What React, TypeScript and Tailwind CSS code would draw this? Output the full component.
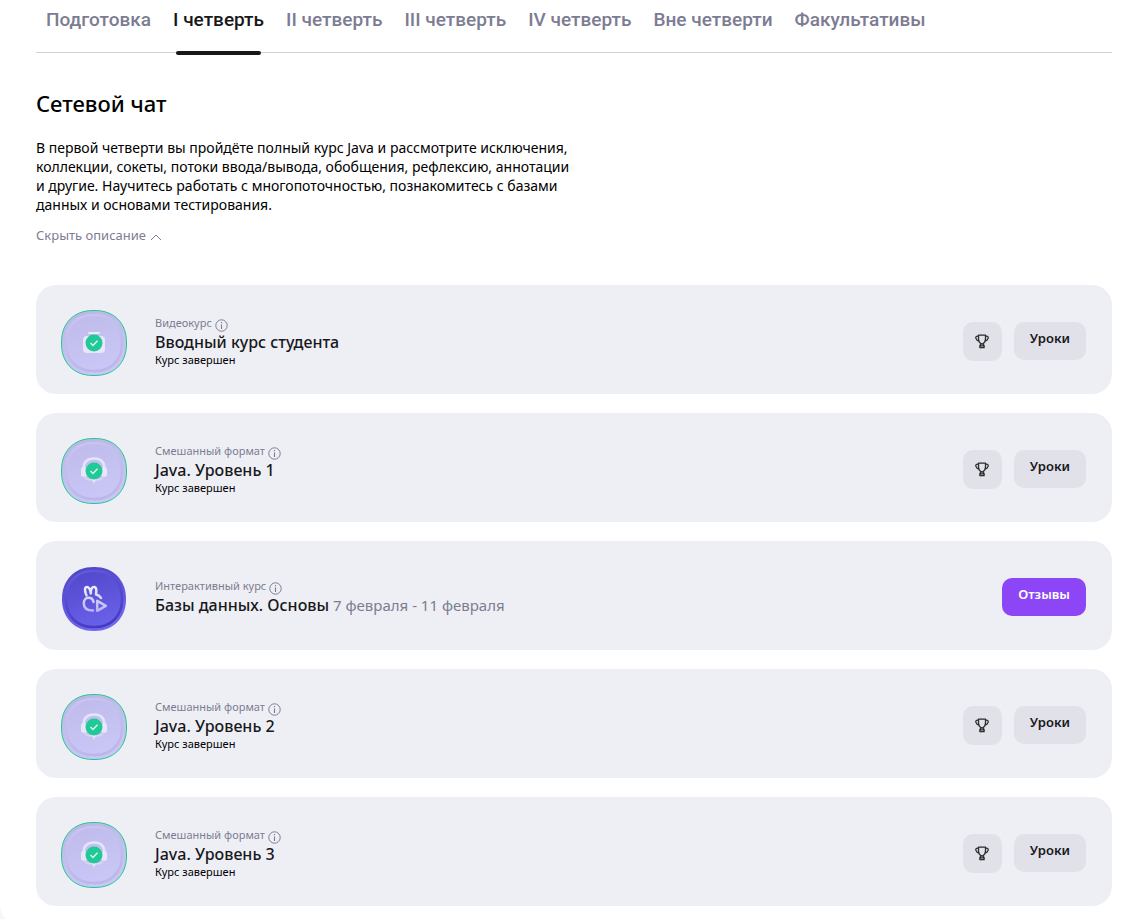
import React, { useState } from 'react';

type Course = {
    format: string;
    title: string;
    icon: 'camera' | 'headset' | 'rabbit';
    dates?: string;
    done: boolean;
};

const tabs = ['Подготовка', 'I четверть', 'II четверть', 'III четверть', 'IV четверть', 'Вне четверти', 'Факультативы'];

const courses: Course[] = [
    { format: 'Видеокурс', title: 'Вводный курс студента', icon: 'camera', done: true },
    { format: 'Смешанный формат', title: 'Java. Уровень 1', icon: 'headset', done: true },
    { format: 'Интерактивный курс', title: 'Базы данных. Основы', icon: 'rabbit', dates: '7 февраля - 11 февраля', done: false },
    { format: 'Смешанный формат', title: 'Java. Уровень 2', icon: 'headset', done: true },
    { format: 'Смешанный формат', title: 'Java. Уровень 3', icon: 'headset', done: true },
];

const SQUIRCLE = 'M33 .5H34C53 .5 65.5 13 65.5 32V34C65.5 53 53 65.5 34 65.5H32C13 65.5 .5 53 .5 34V32C.5 13 13 .5 32 .5Z';
const SQUIRCLE_INNER = 'M33 5H34C50 5 61 16 61 32V34C61 50 50 61 34 61H32C16 61 5 50 5 34V32C5 16 16 5 32 5Z';

const DoneIcon = ({ icon }: { icon: Course['icon'] }) => (
    <svg className="size-[66px] shrink-0" viewBox="0 0 66 66" fill="none" aria-hidden="true">
        <defs>
            <linearGradient id="doneFace" x1="24" y1="4" x2="44" y2="64" gradientUnits="userSpaceOnUse">
                <stop stopColor="#bfbbea" />
                <stop offset="1" stopColor="#cbc8f8" />
            </linearGradient>
            <linearGradient id="doneRim" x1="24" y1="1" x2="40" y2="65" gradientUnits="userSpaceOnUse">
                <stop stopColor="#bcb8e6" />
                <stop offset="1" stopColor="#cac6f6" />
            </linearGradient>
            <linearGradient id="doneEdge" x1="22" y1="4" x2="42" y2="62" gradientUnits="userSpaceOnUse">
                <stop stopColor="#c9c5f1" />
                <stop offset=".5" stopColor="#c0bcec" />
                <stop offset="1" stopColor="#bbb6e8" />
            </linearGradient>
        </defs>
        <path d={SQUIRCLE} fill="url(#doneRim)" stroke="#1fcb94" />
        <path d={SQUIRCLE_INNER} fill="url(#doneFace)" stroke="url(#doneEdge)" strokeWidth="2.500" />
        {icon === 'camera' ? (
            <>
                <rect x="27" y="22" width="12" height="2" rx="1" fill="#ecebfa" />
                <rect x="22" y="26" width="22" height="17" rx="4" fill="#e8e7fa" />
            </>
        ) : (
            <>
                <path d="M22.500 31C22.500 24 26 20.500 33 20.500S43.500 24 43.500 31" stroke="#e6e4f9" strokeWidth="2.500" />
                <rect x="20" y="29" width="6" height="10" rx="3" fill="#e8e7fa" />
                <rect x="40" y="29" width="6" height="10" rx="3" fill="#e8e7fa" />
                <path d="M23 38C25 42 29 42 33 42S41 42 43 38" stroke="#d8d5f5" strokeWidth="1.500" />
                <path d="M30.500 41H35.500L33 46Z" fill="#e6e4f9" />
            </>
        )}
        <circle cx="33" cy="33" r="8.500" fill="#20c997" />
        <path d="M29.500 33L32 35.500L36.500 30.800" stroke="#d9f7ee" strokeWidth="1.500" />
    </svg>
);

const ActiveIcon = () => (
    <svg className="size-[66px] shrink-0" viewBox="0 0 66 66" fill="none" aria-hidden="true">
        <defs>
            <linearGradient id="activeFace" x1="24" y1="4" x2="42" y2="62" gradientUnits="userSpaceOnUse">
                <stop stopColor="#5248cc" />
                <stop offset="1" stopColor="#6a62ea" />
            </linearGradient>
            <linearGradient id="activeRim" x1="20" y1="1" x2="40" y2="65" gradientUnits="userSpaceOnUse">
                <stop stopColor="#4f45c6" />
                <stop offset="1" stopColor="#7269f2" />
            </linearGradient>
            <linearGradient id="activeEdge" x1="22" y1="4" x2="42" y2="62" gradientUnits="userSpaceOnUse">
                <stop stopColor="#6259dc" />
                <stop offset=".5" stopColor="#5249ce" />
                <stop offset="1" stopColor="#453abf" />
            </linearGradient>
            <linearGradient id="rabbit" x1="33" y1="19" x2="33" y2="46" gradientUnits="userSpaceOnUse">
                <stop stopColor="#f4f2ff" />
                <stop offset="1" stopColor="#b9b2f5" />
            </linearGradient>
        </defs>
        <path d="M33 1H33.500C52 1 65 14 65 32.500V33.500C65 52 52 65 33.500 65H32.500C14 65 1 52 1 33.500V32.500C1 14 14 1 32.500 1Z" fill="url(#activeRim)" />
        <path d={SQUIRCLE_INNER} fill="url(#activeFace)" stroke="url(#activeEdge)" strokeWidth="2.500" />
        <g stroke="url(#rabbit)" strokeWidth="2.500" strokeLinecap="round" strokeLinejoin="round">
            <path d="M25.500 29.500C24 26 23 21 25.800 21C28.500 21 29.300 24 29.800 27.500C29.800 24 30.500 21 33 21C35.800 21 35.500 25 35 28.500C37.500 29 39 30.500 40 32" />
            <path d="M32.500 36C32 33 30 31.800 27.500 31.800C24.500 31.800 22.800 34.500 22.800 37.500C22.800 42 26 44.500 32 44.500" />
            <path d="M36.200 34.800V44.800L44.800 39.800Z" />
        </g>
    </svg>
);

const TrophyIcon = () => (
    <svg className="size-4" viewBox="0 0 16 16" fill="none" stroke="#2b2b2e" strokeWidth="1.300" strokeLinejoin="round" aria-hidden="true">
        <path d="M4.500 1.200H11.500V5C11.500 7.500 10 9.200 8 10C6 9.200 4.500 7.500 4.500 5Z" />
        <path d="M4.500 2.200C2 1.800 1.500 3 1.900 4.300C2.300 5.800 3.500 6.600 5.200 6.900M11.500 2.200C14 1.800 14.500 3 14.100 4.300C13.700 5.800 12.500 6.600 10.800 6.900" />
        <path d="M7.200 10L5.900 11.500V13.700H10.100V11.500L8.800 10M5.900 11.800H10.100" />
    </svg>
);

const InfoIcon = () => (
    <svg className="size-[13px]" viewBox="0 0 13 13" fill="none" stroke="#7c7c92" aria-hidden="true">
        <circle cx="6.500" cy="6.500" r="5.700" />
        <path d="M6.500 5.500V10M6.500 3V4.200" strokeWidth="1.100" />
    </svg>
);

const CourseCard = ({ course }: { course: Course }) => (
    <li className="flex items-center rounded-[20px] bg-[#eeeff5] pt-[25px] pr-[26px] pb-[18px] pl-[25px]">
        {course.done ? <DoneIcon icon={course.icon} /> : <ActiveIcon />}
        <div className={`ml-7 min-w-0 flex-1 ${course.done ? 'pb-1' : 'pb-1.5'}`}>
            <div className="flex h-[18px] items-center gap-[3px] text-[11px] text-[#7c7c92]">
                {course.format}
                <button type="button" aria-label="О формате курса" className="mt-1">
                    <InfoIcon />
                </button>
            </div>
            <h3 className="text-base leading-5 font-medium text-[#18181b]">
                {course.title}
                {course.dates && <span className="ml-1 text-[15px] font-normal text-[#7c7c92]">{course.dates}</span>}
            </h3>
            {course.done && <p className="text-[11px] leading-4 text-black">Курс завершен</p>}
        </div>
        <div className="mt-3 flex gap-3 self-start">
            {course.done ? (
                <>
                    <button type="button" aria-label="Достижения" className="flex size-[39px] items-center justify-center rounded-[10px] bg-[#e1e2e9]">
                        <TrophyIcon />
                    </button>
                    <button type="button" className="h-[38px] rounded-[10px] bg-[#e1e2e9] px-4 pb-1 text-[13px] font-semibold text-[#18181b]">
                        Уроки
                    </button>
                </>
            ) : (
                <button type="button" className="h-[38px] rounded-[10px] bg-[#8d46f6] px-4 pb-1 text-[13px] font-semibold text-white">
                    Отзывы
                </button>
            )}
        </div>
    </li>
);

const App = () => {
    const [active, setActive] = useState(1);
    const [open, setOpen] = useState(true);

    return (
        <div className="min-h-screen bg-[#f5f5fb] font-['Noto_Sans',sans-serif]">
            <main className="rounded-bl-[20px] bg-white pr-[21px] pb-[19px] pl-9">
                <nav className="flex h-[53px] gap-[22px] border-b border-[#d0d0de] pl-2.5 font-['Roboto',sans-serif]">
                    {tabs.map((tab, i) => (
                        <button
                            key={tab}
                            type="button"
                            onClick={() => setActive(i)}
                            className={`relative h-[55px] pb-[14px] text-[19px] font-medium whitespace-nowrap ${active === i ? 'text-[#18181b]' : 'text-[#7c7c92]'}`}
                        >
                            {tab}
                            {active === i && <span className="absolute inset-x-[3px] bottom-0 h-1 rounded-sm bg-[#18181b]" />}
                        </button>
                    ))}
                </nav>

                <section>
                    <h2 className="mt-[34px] text-[22px] leading-8 font-medium text-black">Сетевой чат</h2>
                    {open && (
                        <p className="mt-[19px] max-w-[540px] text-sm leading-[19px] text-black">
                            В первой четверти вы пройдёте полный курс Java и рассмотрите исключения,
                            коллекции, сокеты, потоки ввода/вывода, обобщения, рефлексию, аннотации
                            и другие. Научитесь работать с многопоточностью, познакомитесь с базами
                            данных и основами тестирования.
                        </p>
                    )}
                    <button type="button" onClick={() => setOpen(!open)} className="mt-[11px] flex items-center gap-1 text-[13px] leading-5 text-[#7c7c92]">
                        {open ? 'Скрыть описание' : 'Показать описание'}
                        <svg className={`mt-1 h-[7px] w-3 ${open ? '' : 'rotate-180'}`} viewBox="0 0 12 7" fill="none" stroke="currentColor" aria-hidden="true">
                            <path d="M1 6L6 1L11 6" />
                        </svg>
                    </button>
                </section>

                <ul className="mt-10 flex flex-col gap-[19px]">
                    {courses.map((course) => (
                        <CourseCard key={course.title} course={course} />
                    ))}
                </ul>
            </main>
        </div>
    );
};

export default App;
